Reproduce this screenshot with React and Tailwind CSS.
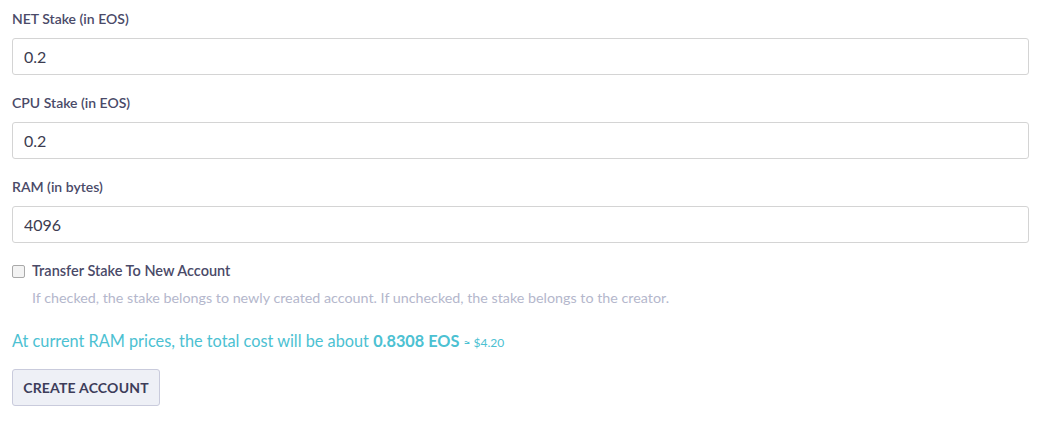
export default function App() {
  const fields = [
    { label: 'NET Stake (in EOS)', value: '0.2' },
    { label: 'CPU Stake (in EOS)', value: '0.2' },
    { label: 'RAM (in bytes)', value: '4096' },
  ]

  return (
    <div className="w-[1042px] h-[421px] bg-white px-3 pt-[10px] font-['Lato','Open_Sans',sans-serif]">
      {fields.map((f) => (
        <div key={f.label} className="mb-[19px]">
          <label className="block text-[14px] font-semibold text-[#4a4a68] leading-[18px] mb-[10px]">
            {f.label}
          </label>
          <input
            readOnly
            value={f.value}
            className="block w-[1017px] h-[37px] px-[11px] text-[16px] text-[#3c3c50] border border-[#d4d4d4] rounded-[3px] outline-none"
          />
        </div>
      ))}

      {/* Transfer checkbox */}
      <div className="flex items-center gap-[7px] mt-[14px]">
        <span className="w-[13px] h-[13px] rounded-[2px] border border-[#a9a9a9] bg-[#f3f3f3]" />
        <span className="text-[14.5px] font-semibold text-[#4a4a68] leading-[18px]">
          Transfer Stake To New Account
        </span>
      </div>
      <p className="ml-[20px] mt-[9px] text-[14.3px] text-[#b4b7cc] leading-[18px]">
        If checked, the stake belongs to newly created account. If unchecked, the stake belongs to the creator.
      </p>

      <p className="mt-[24px] text-[16.3px] text-[#4cc1d2] leading-[20px]">
        At current RAM prices, the total cost will be about{' '}
        <span className="font-bold">0.8308 EOS</span>{' '}
        <span className="text-[12px]">≈ $4.20</span>
      </p>

      <button className="mt-[16px] h-[37px] w-[148px] rounded-[3px] border border-[#c9cbdc] bg-[#eef0f6] text-[14px] font-bold text-[#3d3d5a] tracking-[0.2px]">
        CREATE ACCOUNT
      </button>
    </div>
  )
}
